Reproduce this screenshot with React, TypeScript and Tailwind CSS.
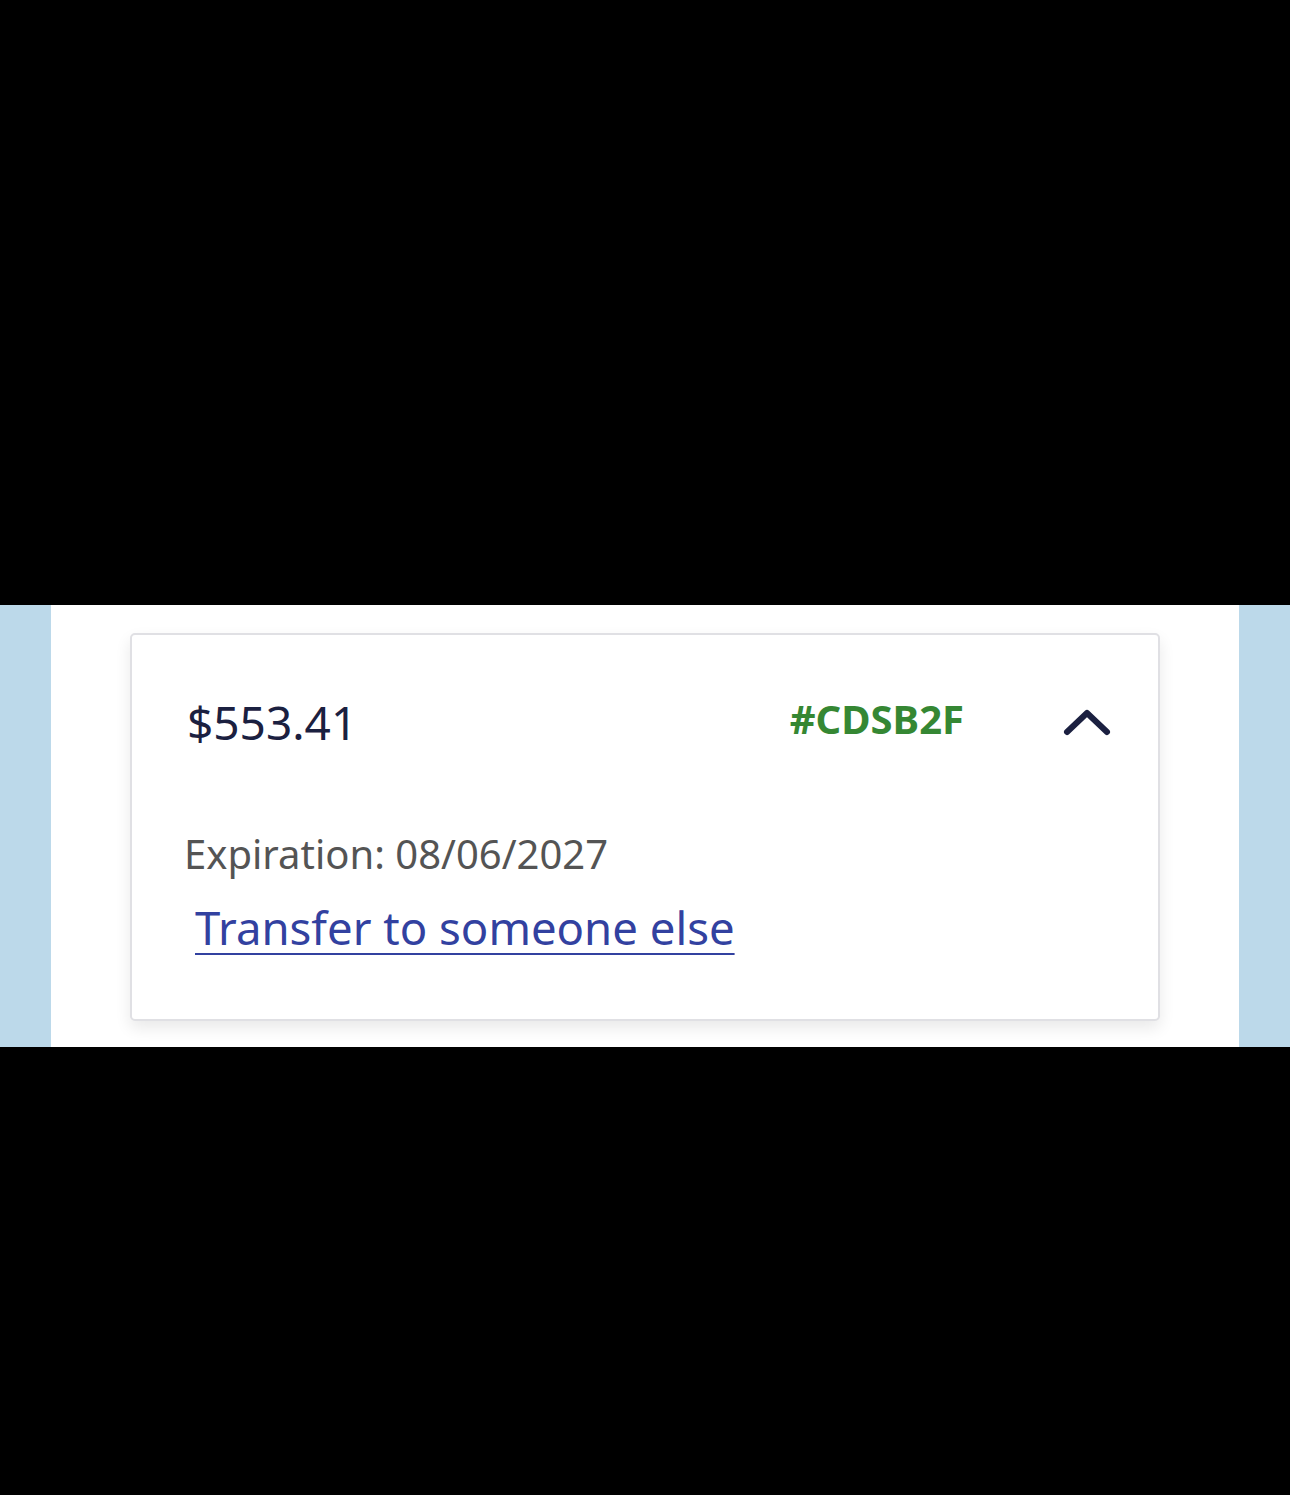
export default function App() {
  return (
    <main className="w-[1290px] h-[1495px] bg-black flex flex-col font-['Noto_Sans',_'Open_Sans',_sans-serif]">
      {/* top letterbox */}
      <div className="h-[605px] shrink-0" />

      {/* page strip */}
      <section className="h-[442px] shrink-0 bg-[#bcd9ea] px-[51px]">
        <div className="h-full bg-white px-[79px] pt-[28px]">
          <div className="h-[388px] border-2 border-[#e0e0e4] rounded-[5px] bg-white shadow-[0_7px_16px_rgba(0,0,0,0.09)] pl-[55px] pr-[47px] pt-[57px]">
            <div className="flex items-center h-[60px]">
              <span className="flex-1 text-[46px] leading-none text-[#1b2040]">$553.41</span>
              <span className="-mt-[6px] text-[40px] leading-none font-bold text-[#358733]">#CDSB2F</span>
              <svg
                className="ml-[99px] w-[48px] h-[30px]"
                viewBox="0 0 48 30"
                fill="none"
                stroke="#1b2040"
                strokeWidth="6"
                strokeLinecap="round"
                strokeLinejoin="round"
                aria-hidden="true"
              >
                <path d="M4 25 L24 6 L44 25" />
              </svg>
            </div>

            <p className="mt-[77px] h-[50px] flex items-center text-[40px] leading-none text-[#545454] -ml-[3px]">
              Expiration: 08/06/2027
            </p>
            <a
              href="#"
              className="mt-[21px] ml-[8px] h-[56px] flex items-center text-[45.5px] leading-none text-[#3241a0] underline decoration-2 underline-offset-[8px]"
            >
              Transfer to someone else
            </a>
          </div>
        </div>
      </section>

      {/* bottom letterbox */}
      <div className="flex-1" />
    </main>
  );
}
